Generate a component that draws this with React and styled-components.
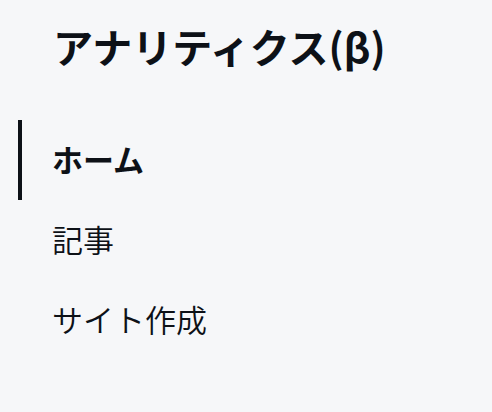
import React from "react";
import styled, { createGlobalStyle } from "styled-components";

const Global = createGlobalStyle`
  html, body {
    margin: 0;
    padding: 0;
    background: #f6f7f9;
  }
  body {
    font-family: "Noto Sans CJK JP", "Noto Sans", sans-serif;
    color: #0d1117;
  }
`;

const Sidebar = styled.aside`
  width: 492px;
  height: 412px;
  box-sizing: border-box;
  padding: 18px 0 0 18px;
  display: flex;
  flex-direction: column;
`;

const Title = styled.h1`
  margin: 0 0 46px 35px;
  font-size: 40px;
  line-height: 56px;
  font-weight: 700;
  color: #0d1117;
`;

const Nav = styled.nav`
  display: flex;
  flex-direction: column;
`;

const Item = styled.a`
  display: flex;
  align-items: center;
  height: 80px;
  box-sizing: border-box;
  padding: 0 0 4px 30px;
  border-left: 4px solid ${(p) => (p.$active ? "#0d1117" : "transparent")};
  font-size: 31px;
  font-weight: ${(p) => (p.$active ? 700 : 350)};
  color: #0d1117;
  text-decoration: none;
  cursor: pointer;
`;

export default function App() {
  return (
    <>
      <Global />
      <Sidebar>
        <Title>アナリティクス(β)</Title>
        <Nav>
          <Item $active>ホーム</Item>
          <Item>記事</Item>
          <Item>サイト作成</Item>
        </Nav>
      </Sidebar>
    </>
  );
}
